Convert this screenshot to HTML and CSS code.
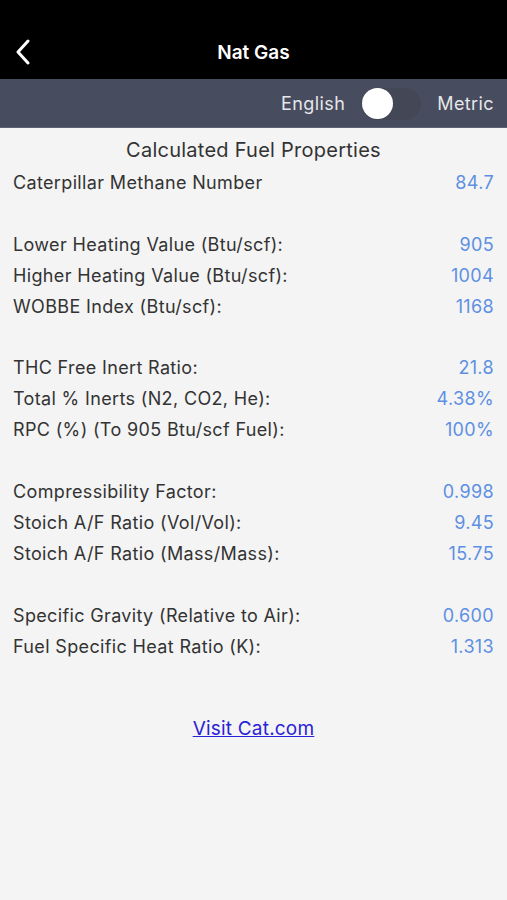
FILE: index.html
```html
<!DOCTYPE html>
<html>
<head>
<meta charset="utf-8">
<link rel="stylesheet" href="styles.css">
</head>
<body>
<header class="nav">
  <svg class="back" width="14" height="26" viewBox="0 0 14 26"><path d="M12 2 L2 13 L12 24" fill="none" stroke="#fff" stroke-width="3" stroke-linecap="round" stroke-linejoin="round"/></svg>
  <div class="nav-title">Nat Gas</div>
</header>
<div class="units">
  <span class="unit">English</span>
  <span class="switch"><span class="knob"></span></span>
  <span class="unit">Metric</span>
</div>
<main class="content">
  <h1 class="heading">Calculated Fuel Properties</h1>
  <div class="row"><span>Caterpillar Methane Number</span><span class="val">84.7</span></div>
  <div class="row"></div>
  <div class="row"><span>Lower Heating Value (Btu/scf):</span><span class="val">905</span></div>
  <div class="row"><span>Higher Heating Value (Btu/scf):</span><span class="val">1004</span></div>
  <div class="row"><span>WOBBE Index (Btu/scf):</span><span class="val">1168</span></div>
  <div class="row"></div>
  <div class="row"><span>THC Free Inert Ratio:</span><span class="val">21.8</span></div>
  <div class="row"><span>Total % Inerts (N2, CO2, He):</span><span class="val">4.38%</span></div>
  <div class="row"><span>RPC (%) (To 905 Btu/scf Fuel):</span><span class="val">100%</span></div>
  <div class="row"></div>
  <div class="row"><span>Compressibility Factor:</span><span class="val">0.998</span></div>
  <div class="row"><span>Stoich A/F Ratio (Vol/Vol):</span><span class="val">9.45</span></div>
  <div class="row"><span>Stoich A/F Ratio (Mass/Mass):</span><span class="val">15.75</span></div>
  <div class="row"></div>
  <div class="row"><span>Specific Gravity (Relative to Air):</span><span class="val">0.600</span></div>
  <div class="row"><span>Fuel Specific Heat Ratio (K):</span><span class="val">1.313</span></div>
  <div class="link-wrap"><a class="link" href="#">Visit Cat.com</a></div>
</main>
</body>
</html>
```
FILE: styles.css
```css
html, body {
  margin: 0;
  padding: 0;
  background: #f4f4f4;
  font-family: Inter, "Liberation Sans", Arial, sans-serif;
}
.nav {
  height: 79px;
  background: #000;
  display: flex;
  align-items: center;
  justify-content: center;
  position: relative;
}
.back {
  position: absolute;
  left: 16px;
  top: 39px;
}
.nav-title {
  color: #fff;
  font-weight: 600;
  font-size: 19px;
  margin-top: 25px;
}
.units {
  height: 49px;
  background: #474c5e;
  display: flex;
  align-items: center;
  justify-content: flex-end;
  padding-right: 13px;
  padding-top: 1px;
  border-bottom: 1px solid #5d6272;
  box-sizing: border-box;
}
.unit {
  color: #e6e7ea;
  font-size: 18px;
  letter-spacing: 0.4px;
}
.switch {
  width: 60px;
  height: 32px;
  border-radius: 16px;
  background: #434756;
  margin: 0 16px 0 16px;
  display: flex;
  align-items: center;
  padding-left: 1px;
  box-sizing: border-box;
}
.knob {
  width: 31px;
  height: 31px;
  border-radius: 50%;
  background: #fff;
}
.content {
  padding: 7px 13px 0;
}
.heading {
  margin: 0;
  font-weight: normal;
  font-size: 20px;
  letter-spacing: 0.25px;
  color: #333;
  text-align: center;
  line-height: 31px;
  padding-bottom: 1px;
}
.row {
  height: 30.93px;
  display: flex;
  align-items: center;
  justify-content: space-between;
  font-size: 18px;
  letter-spacing: 0.35px;
  color: #333;
}
.val {
  color: #5d90e2;
}
.link-wrap {
  text-align: center;
  padding-top: 55px;
}
.link {
  color: #2a22d6;
  font-size: 19px;
  letter-spacing: 0.2px;
  text-decoration: underline;
}
```
